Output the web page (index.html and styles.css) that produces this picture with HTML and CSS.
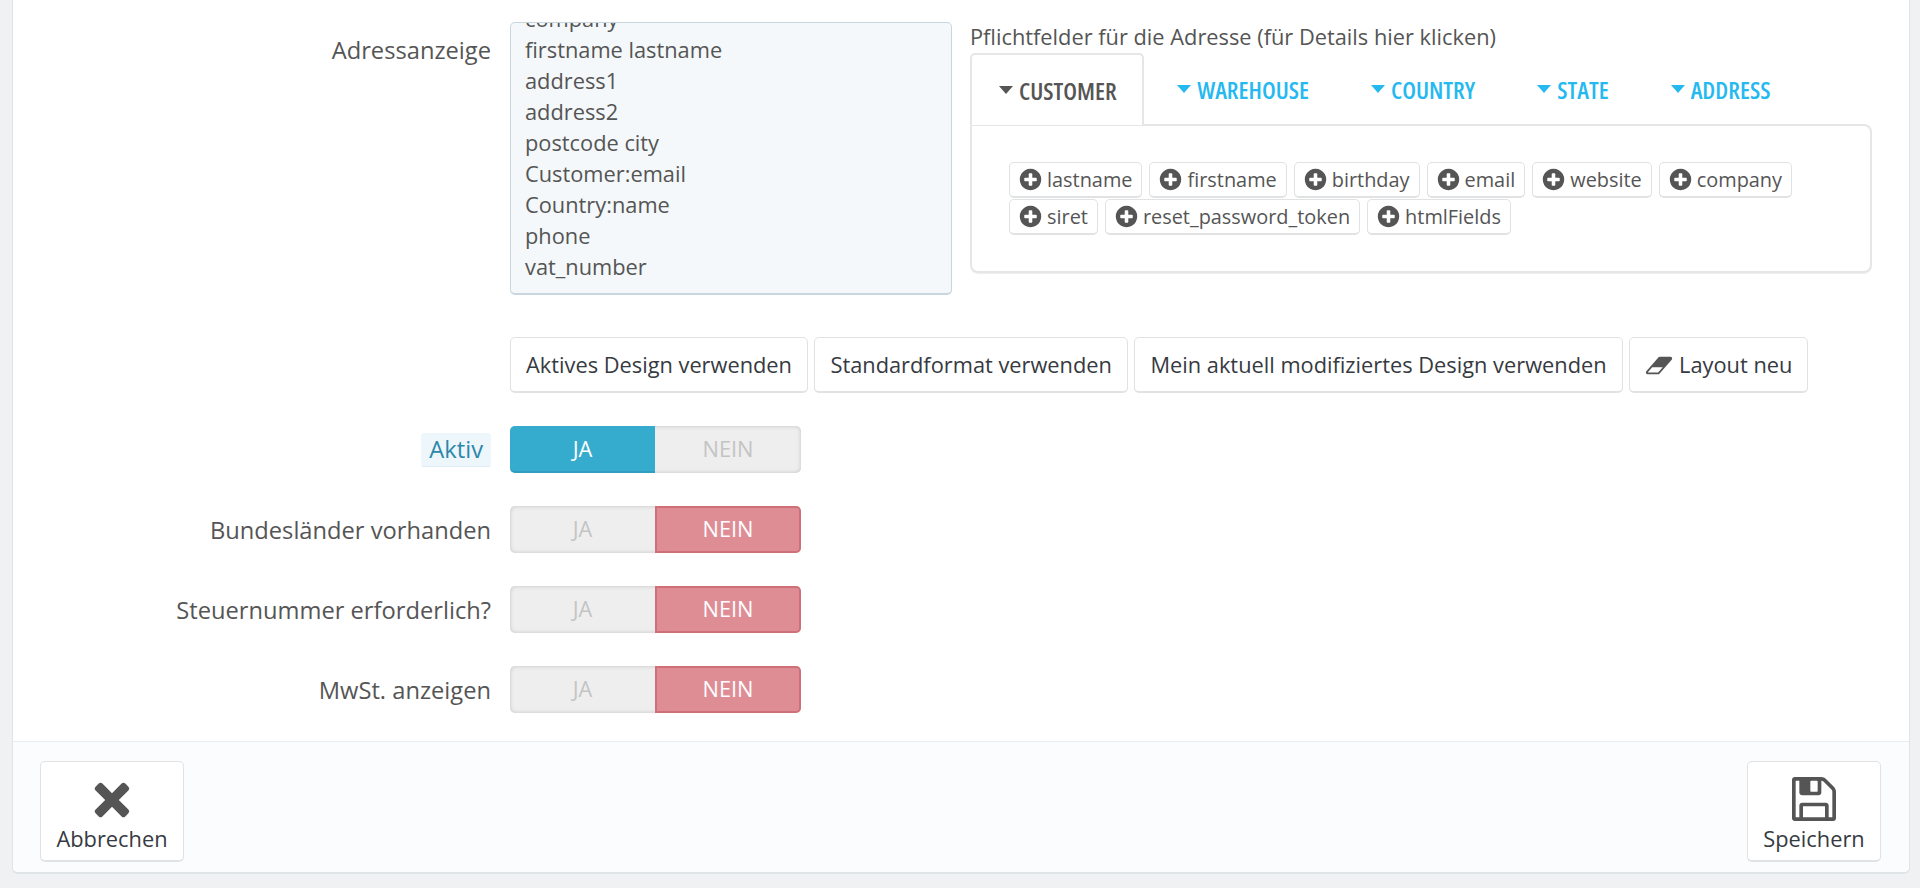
FILE: index.html
```html
<!DOCTYPE html>
<html lang="de">
<head>
<meta charset="utf-8">
<title>Adressanzeige</title>
<link rel="stylesheet" href="styles.css">
</head>
<body>
<main class="panel">
  <form class="form">
    <div class="row row-address">
      <div class="label">Adressanzeige</div>
      <div class="format-box">
        <div class="format-line format-first">company</div>
        <div class="format-line">firstname lastname</div>
        <div class="format-line">address1</div>
        <div class="format-line">address2</div>
        <div class="format-line">postcode city</div>
        <div class="format-line">Customer:email</div>
        <div class="format-line">Country:name</div>
        <div class="format-line">phone</div>
        <div class="format-line">vat_number</div>
      </div>
      <div class="fields">
        <div class="fields-title">Pflichtfelder für die Adresse (für Details hier klicken)</div>
        <div class="tabs">
          <div class="tab tab-active"><i class="caret"></i><span class="tab-text">CUSTOMER</span></div>
          <div class="tab"><i class="caret"></i><span class="tab-text">WAREHOUSE</span></div>
          <div class="tab"><i class="caret"></i><span class="tab-text">COUNTRY</span></div>
          <div class="tab"><i class="caret"></i><span class="tab-text">STATE</span></div>
          <div class="tab"><i class="caret"></i><span class="tab-text">ADDRESS</span></div>
        </div>
        <div class="tab-pane">
          <div class="tag-list">
            <span class="tag"><svg class="plus" viewBox="0 0 1792 1792"><path d="M1344 960v-128q0-26-19-45t-45-19h-256v-256q0-26-19-45t-45-19h-128q-26 0-45 19t-19 45v256h-256q-26 0-45 19t-19 45v128q0 26 19 45t45 19h256v256q0 26 19 45t45 19h128q26 0 45-19t19-45v-256h256q26 0 45-19t19-45zm320-64q0 209-103 385.5t-279.5 279.5-385.5 103-385.5-103-279.5-279.5-103-385.5 103-385.5 279.5-279.5 385.5-103 385.5 103 279.5 279.5 103 385.5z"/></svg>lastname</span>
            <span class="tag"><svg class="plus" viewBox="0 0 1792 1792"><path d="M1344 960v-128q0-26-19-45t-45-19h-256v-256q0-26-19-45t-45-19h-128q-26 0-45 19t-19 45v256h-256q-26 0-45 19t-19 45v128q0 26 19 45t45 19h256v256q0 26 19 45t45 19h128q26 0 45-19t19-45v-256h256q26 0 45-19t19-45zm320-64q0 209-103 385.5t-279.5 279.5-385.5 103-385.5-103-279.5-279.5-103-385.5 103-385.5 279.5-279.5 385.5-103 385.5 103 279.5 279.5 103 385.5z"/></svg>firstname</span>
            <span class="tag"><svg class="plus" viewBox="0 0 1792 1792"><path d="M1344 960v-128q0-26-19-45t-45-19h-256v-256q0-26-19-45t-45-19h-128q-26 0-45 19t-19 45v256h-256q-26 0-45 19t-19 45v128q0 26 19 45t45 19h256v256q0 26 19 45t45 19h128q26 0 45-19t19-45v-256h256q26 0 45-19t19-45zm320-64q0 209-103 385.5t-279.5 279.5-385.5 103-385.5-103-279.5-279.5-103-385.5 103-385.5 279.5-279.5 385.5-103 385.5 103 279.5 279.5 103 385.5z"/></svg>birthday</span>
            <span class="tag"><svg class="plus" viewBox="0 0 1792 1792"><path d="M1344 960v-128q0-26-19-45t-45-19h-256v-256q0-26-19-45t-45-19h-128q-26 0-45 19t-19 45v256h-256q-26 0-45 19t-19 45v128q0 26 19 45t45 19h256v256q0 26 19 45t45 19h128q26 0 45-19t19-45v-256h256q26 0 45-19t19-45zm320-64q0 209-103 385.5t-279.5 279.5-385.5 103-385.5-103-279.5-279.5-103-385.5 103-385.5 279.5-279.5 385.5-103 385.5 103 279.5 279.5 103 385.5z"/></svg>email</span>
            <span class="tag"><svg class="plus" viewBox="0 0 1792 1792"><path d="M1344 960v-128q0-26-19-45t-45-19h-256v-256q0-26-19-45t-45-19h-128q-26 0-45 19t-19 45v256h-256q-26 0-45 19t-19 45v128q0 26 19 45t45 19h256v256q0 26 19 45t45 19h128q26 0 45-19t19-45v-256h256q26 0 45-19t19-45zm320-64q0 209-103 385.5t-279.5 279.5-385.5 103-385.5-103-279.5-279.5-103-385.5 103-385.5 279.5-279.5 385.5-103 385.5 103 279.5 279.5 103 385.5z"/></svg>website</span>
            <span class="tag"><svg class="plus" viewBox="0 0 1792 1792"><path d="M1344 960v-128q0-26-19-45t-45-19h-256v-256q0-26-19-45t-45-19h-128q-26 0-45 19t-19 45v256h-256q-26 0-45 19t-19 45v128q0 26 19 45t45 19h256v256q0 26 19 45t45 19h128q26 0 45-19t19-45v-256h256q26 0 45-19t19-45zm320-64q0 209-103 385.5t-279.5 279.5-385.5 103-385.5-103-279.5-279.5-103-385.5 103-385.5 279.5-279.5 385.5-103 385.5 103 279.5 279.5 103 385.5z"/></svg>company</span>
            <span class="tag"><svg class="plus" viewBox="0 0 1792 1792"><path d="M1344 960v-128q0-26-19-45t-45-19h-256v-256q0-26-19-45t-45-19h-128q-26 0-45 19t-19 45v256h-256q-26 0-45 19t-19 45v128q0 26 19 45t45 19h256v256q0 26 19 45t45 19h128q26 0 45-19t19-45v-256h256q26 0 45-19t19-45zm320-64q0 209-103 385.5t-279.5 279.5-385.5 103-385.5-103-279.5-279.5-103-385.5 103-385.5 279.5-279.5 385.5-103 385.5 103 279.5 279.5 103 385.5z"/></svg>siret</span>
            <span class="tag"><svg class="plus" viewBox="0 0 1792 1792"><path d="M1344 960v-128q0-26-19-45t-45-19h-256v-256q0-26-19-45t-45-19h-128q-26 0-45 19t-19 45v256h-256q-26 0-45 19t-19 45v128q0 26 19 45t45 19h256v256q0 26 19 45t45 19h128q26 0 45-19t19-45v-256h256q26 0 45-19t19-45zm320-64q0 209-103 385.5t-279.5 279.5-385.5 103-385.5-103-279.5-279.5-103-385.5 103-385.5 279.5-279.5 385.5-103 385.5 103 279.5 279.5 103 385.5z"/></svg>reset_password_token</span>
            <span class="tag"><svg class="plus" viewBox="0 0 1792 1792"><path d="M1344 960v-128q0-26-19-45t-45-19h-256v-256q0-26-19-45t-45-19h-128q-26 0-45 19t-19 45v256h-256q-26 0-45 19t-19 45v128q0 26 19 45t45 19h256v256q0 26 19 45t45 19h128q26 0 45-19t19-45v-256h256q26 0 45-19t19-45zm320-64q0 209-103 385.5t-279.5 279.5-385.5 103-385.5-103-279.5-279.5-103-385.5 103-385.5 279.5-279.5 385.5-103 385.5 103 279.5 279.5 103 385.5z"/></svg>htmlFields</span>
          </div>
        </div>
      </div>
    </div>

    <div class="row row-buttons">
      <div class="label"></div>
      <div class="btn-group">
        <button type="button" class="btn">Aktives Design verwenden</button>
        <button type="button" class="btn">Standardformat verwenden</button>
        <button type="button" class="btn">Mein aktuell modifiziertes Design verwenden</button>
        <button type="button" class="btn"><svg class="eraser" viewBox="0 0 2048 1792"><path d="M960 1408l336-384h-768l-336 384h768zm1013-1077q15 34 9.5 71.5t-30.5 65.5l-896 1024q-38 44-96 44h-768q-38 0-69.5-20.5t-47.5-54.5q-15-34-9.5-71.5t30.5-65.5l896-1024q38-44 96-44h768q38 0 70 20.5t47 54.5z"/></svg>Layout neu</button>
      </div>
    </div>

    <div class="row row-switch">
      <div class="label"><span class="hint">Aktiv</span></div>
      <div class="switch"><span class="sw sw-on">JA</span><span class="sw">NEIN</span></div>
    </div>
    <div class="row row-switch">
      <div class="label">Bundesländer vorhanden</div>
      <div class="switch"><span class="sw">JA</span><span class="sw sw-off">NEIN</span></div>
    </div>
    <div class="row row-switch">
      <div class="label">Steuernummer erforderlich?</div>
      <div class="switch"><span class="sw">JA</span><span class="sw sw-off">NEIN</span></div>
    </div>
    <div class="row row-switch">
      <div class="label">MwSt. anzeigen</div>
      <div class="switch"><span class="sw">JA</span><span class="sw sw-off">NEIN</span></div>
    </div>
  </form>

  <footer class="footer">
    <button type="button" class="action action-cancel">
      <svg class="action-icon" viewBox="0 0 44 44"><path d="M22 16.2 31.6 6.6a2.6 2.6 0 0 1 3.7 0l3.1 3.1a2.6 2.6 0 0 1 0 3.7L28.8 23l9.6 9.600a2.6 2.6 0 0 1 0 3.7l-3.1 3.1a2.6 2.6 0 0 1-3.7 0L22 29.800l-9.600 9.600a2.6 2.6 0 0 1-3.7 0l-3.100-3.100a2.6 2.6 0 0 1 0-3.700l9.600-9.600-9.600-9.600a2.6 2.6 0 0 1 0-3.700l3.100-3.100a2.6 2.6 0 0 1 3.700 0z"/></svg>
      <span>Abbrechen</span>
    </button>
    <button type="button" class="action action-save">
      <svg class="action-icon" viewBox="128 128 1536 1536"><path d="M512 1536h768v-384h-768v384zm896 0h128v-896q0-14-10-38.500t-20-34.500l-281-281q-10-10-34-20t-39-10v416q0 40-28 68t-68 28h-576q-40 0-68-28t-28-68v-416h-128v1280h128v-416q0-40 28-68t68-28h832q40 0 68 28t28 68v416zm-384-928v-320q0-13-9.500-22.500t-22.500-9.500h-192q-13 0-22.500 9.500t-9.500 22.500v320q0 13 9.500 22.500t22.500 9.500h192q13 0 22.500-9.500t9.500-22.500zm640 32v928q0 40-28 68t-68 28h-1344q-40 0-68-28t-28-68v-1344q0-40 28-68t68-28h928q40 0 88 20t76 48l280 280q28 28 48 76t20 88z"/></svg>
      <span>Speichern</span>
    </button>
  </footer>
</main>
</body>
</html>
```

FILE: styles.css
```css
* {
  box-sizing: border-box;
}

html,
body {
  margin: 0;
  height: 100%;
}

body {
  padding: 0 10px 14px 12px;
  background: #eff1f2;
  color: #555;
  font-family: "Open Sans", "Liberation Sans", sans-serif;
  font-size: 21.8px;
  overflow: hidden;
}

.panel {
  height: 874px;
  display: flex;
  flex-direction: column;
  background: #fff;
  border-left: 1px solid #dfe4e7;
  border-right: 1px solid #dfe4e7;
  border-bottom: 2px solid #dfe5e7;
  border-radius: 0 0 6px 6px;
}

.form {
  flex: 1;
  padding-top: 22px;
}

.row {
  display: flex;
  align-items: flex-start;
}

.label {
  flex: none;
  width: 478px;
  margin-right: 19px;
  font-size: 23.7px;
  text-align: right;
  line-height: 30px;
  white-space: nowrap;
}

.row-address .label {
  padding-top: 13px;
}

.format-box {
  flex: none;
  width: 442px;
  height: 273px;
  padding: 0 14px;
  overflow: hidden;
  background: #f4f8fa;
  border: 1px solid #c7d7dd;
  border-bottom-width: 2px;
  border-radius: 5px;
  line-height: 31px;
}

.format-first {
  margin-top: -20px;
}

.fields {
  flex: none;
  width: 902px;
  margin-left: 18px;
}

.fields-title {
  height: 31px;
  line-height: 30px;
  white-space: nowrap;
}

.tabs {
  display: flex;
  height: 71px;
  gap: 5px;
  font-size: 24.2px;
  font-weight: 600;
  font-stretch: 75%;
}

.tab {
  display: flex;
  align-items: center;
  padding: 0 28.5px;
  color: #25b9f0;
  white-space: nowrap;
  height: 72px;
}

.tab-active {
  padding: 0 25px 0 27px;
  color: #555;
  background: #fff;
  position: relative;
  z-index: 1;
  border: 2px solid #e4e6e7;
  border-bottom: 0;
  border-radius: 5px 5px 0 0;
}

.caret {
  flex: none;
  width: 0;
  height: 0;
  margin-right: 6px;
  border-top: 8px solid currentColor;
  border-left: 7px solid transparent;
  border-right: 7px solid transparent;
}

.tab-pane {
  height: 149px;
  padding: 36px 37px;
  border: 2px solid #e4e6e7;
  border-radius: 0 8px 8px 8px;
  box-shadow: 0 1px 0 #eee;
}

.tag-list {
  display: flex;
  flex-wrap: wrap;
  gap: 1px 7px;
}

.tag {
  display: flex;
  align-items: center;
  height: 36px;
  padding: 0 9px 0 9px;
  border: 1px solid #e0e2e3;
  border-bottom-width: 2px;
  border-radius: 5px;
  font-size: 19.9px;
  white-space: nowrap;
}

.plus {
  width: 25px;
  height: 25px;
  margin-right: 4px;
  margin-left: -1px;
  fill: #555;
}

.row-buttons {
  margin-top: 42px;
}

.btn-group {
  display: flex;
  gap: 6.5px;
}

.btn {
  height: 56px;
  padding: 0 15px;
  background: #fff;
  border: 1px solid #e0e2e3;
  border-bottom-width: 2px;
  border-radius: 5px;
  color: #363a41;
  font: inherit;
  white-space: nowrap;
}

.eraser {
  width: 28px;
  height: 25px;
  margin-right: 6px;
  vertical-align: -5px;
  fill: #555;
}

.row-switch {
  height: 47px;
  margin-top: 33px;
  align-items: center;
}

.hint {
  display: inline-block;
  height: 34px;
  padding: 0 8px;
  background: #edf7fb;
  border-bottom: 1px solid #dcedf5;
  border-radius: 3px;
  color: #2d87ab;
  line-height: 33px;
}

.switch {
  display: flex;
  width: 291px;
  height: 47px;
  background: #eee;
  border-radius: 5px;
  box-shadow: inset 0 0 4px rgba(0, 0, 0, 0.18);
}

.sw {
  flex: 1;
  text-align: center;
  line-height: 45px;
  color: #c4c4c4;
}

.sw:first-child {
  flex: 0 0 145px;
}

.sw-on {
  background: #35acce;
  border-bottom: 2px solid #2f9dbd;
  border-radius: 5px 0 0 5px;
  color: #fff;
}

.sw-off {
  background: #de8d95;
  border: 2px solid #cf7079;
  border-radius: 0 5px 5px 0;
  line-height: 41px;
  color: #fff;
}

.footer {
  flex: none;
  height: 131px;
  display: flex;
  justify-content: space-between;
  padding: 19px 28px 0 27px;
  background: #fbfcfd;
  border-top: 1px solid #eaeced;
  border-radius: 0 0 6px 6px;
}

.action {
  display: flex;
  flex-direction: column;
  align-items: center;
  height: 101px;
  padding: 15px 10px 0;
  background: #fff;
  border: 1px solid #e0e2e3;
  border-bottom-width: 2px;
  border-radius: 5px;
  color: #363a41;
  font: inherit;
}

.action-cancel {
  width: 144px;
}

.action-save {
  width: 134px;
}

.action-icon {
  flex: none;
  width: 44px;
  height: 44px;
  fill: #555;
}

.action span {
  margin-top: 3px;
  line-height: 30px;
}
```
